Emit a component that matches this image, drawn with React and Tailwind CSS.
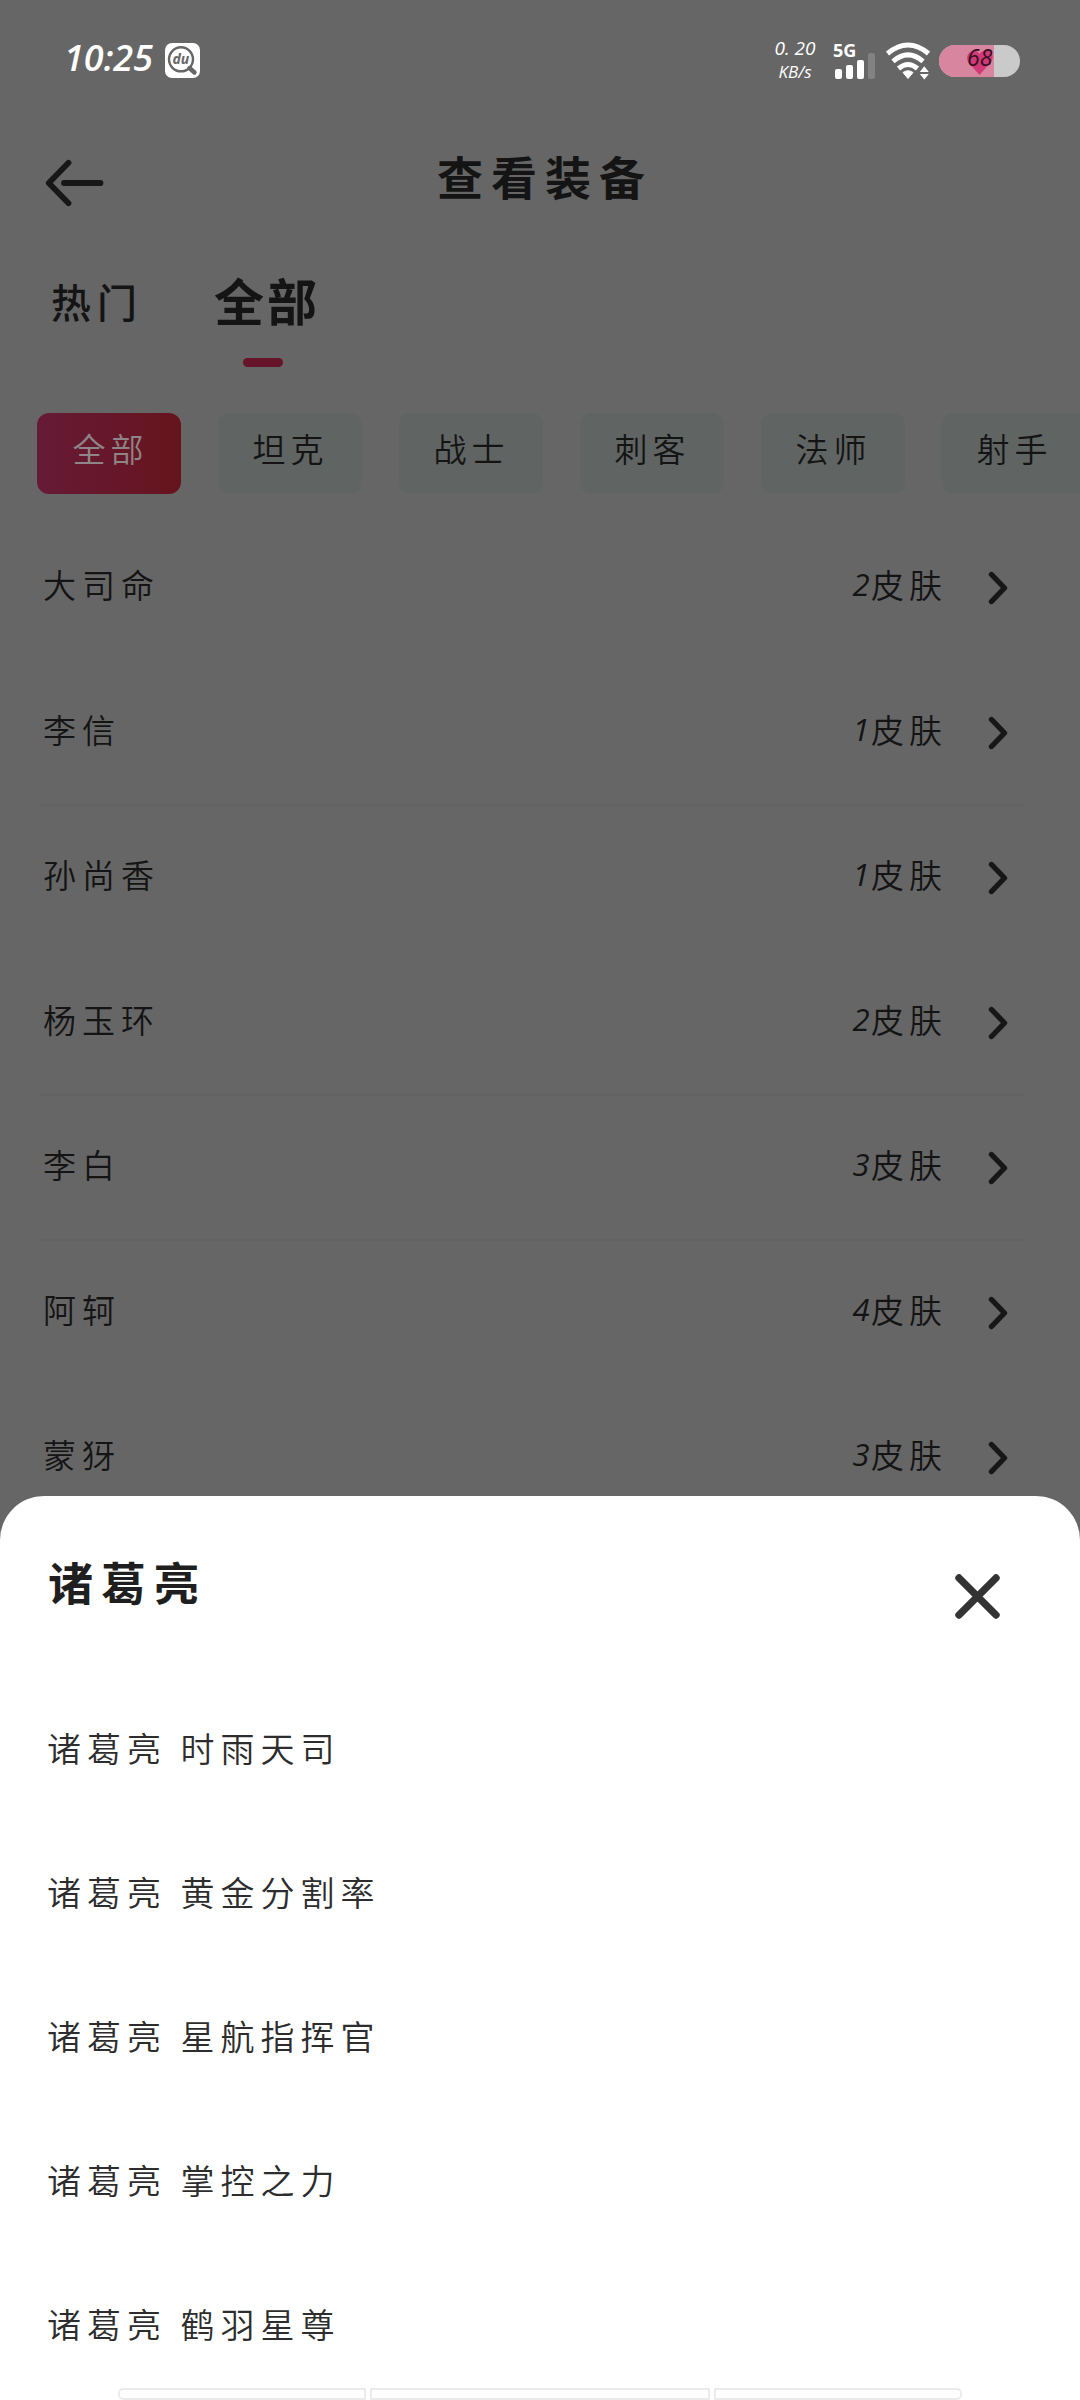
const cjk = "font-['Noto_Sans_CJK_SC','Noto_Sans',sans-serif]";

const roles = ["坦克", "战士", "刺客", "法师", "射手"];

const heroes = [
  { name: "大司命", count: "2" },
  { name: "李信", count: "1", line: true },
  { name: "孙尚香", count: "1" },
  { name: "杨玉环", count: "2", line: true },
  { name: "李白", count: "3", line: true },
  { name: "阿轲", count: "4" },
  { name: "蒙犽", count: "3" },
];

const skins = ["时雨天司", "黄金分割率", "星航指挥官", "掌控之力", "鹤羽星尊"];

function SearchBadge() {
  return (
    <svg className="ml-[15px] mt-[43px] h-[35px] w-[35px] shrink-0" viewBox="0 0 35 35">
      <rect width="35" height="35" rx="7" fill="#fff" />
      <circle cx="16" cy="16.3" r="12" fill="none" stroke="#666" strokeWidth="2.4" />
      <path d="M24.5 25 L29.5 29.5" stroke="#666" strokeWidth="4.4" strokeLinecap="round" />
      <text x="15.8" y="21" textAnchor="middle" fontSize="14" fontWeight="700" fontStyle="italic" fontFamily="Open Sans, sans-serif" fill="#666">du</text>
    </svg>
  );
}

function Signal() {
  return (
    <div className="ml-[17px] mt-[41px] flex w-[44px] flex-col">
      <span className="h-[18px] text-[18px] leading-[18px] font-bold">5G</span>
      <div className="-mt-[6px] ml-[2px] flex h-[26px] items-end gap-[4px]">
        <i className="h-[10px] w-[7px] rounded-[2px] bg-white" />
        <i className="h-[14px] w-[7px] rounded-[2px] bg-white" />
        <i className="h-[19px] w-[7px] rounded-[2px] bg-white" />
        <i className="h-[26px] w-[7px] rounded-[2px] bg-[#828282]" />
      </div>
    </div>
  );
}

function Wifi() {
  return (
    <svg className="ml-[9px] mt-[42px] h-[38px] w-[45px] shrink-0" viewBox="0 0 45 38" fill="none" stroke="#fff" strokeWidth="5">
      <path d="M1.5 11.5 Q22 -5.5 42.5 11.5" />
      <path d="M7 19.3 Q22 6.5 37 19.3" />
      <path d="M12.5 26.5 Q22 18.5 31.5 26.5" />
      <path d="M17 30.5 Q22 27 27 30.5 L22 36.5 Z" fill="#fff" stroke="#fff" strokeWidth="1" />
      <path d="M33.8 30 L38.3 24.2 L42.8 30 Z M33.8 32 L38.3 37.5 L42.8 32 Z" fill="#fff" stroke="none" />
    </svg>
  );
}

function Battery() {
  return (
    <div className="relative mt-[45px] ml-[8px] h-[32px] w-[81px]">
      <div className="flex h-full w-full overflow-hidden rounded-full bg-[#cacaca]">
        <div className="h-full w-[55px] overflow-hidden bg-[#d8859f]">
          <svg className="mt-[4px] ml-[27px] h-[27px] w-[28px]" viewBox="0 0 28 27">
            <path d="M13.5 26 L2 13 C-1 7 4 0 10 2 Q12.5 3 13.5 5 Q15 2 19 1.5 C26 1 29 8 25 13 Z" fill="#d13a76" />
          </svg>
        </div>
      </div>
      <span className="absolute -top-[5px] left-[28px] text-[23px] leading-[34px] text-[#35101f] italic">68</span>
    </div>
  );
}

function StatusBar() {
  return (
    <div className="flex h-[120px] shrink-0 items-start font-['Open_Sans',sans-serif] text-white">
      <span className="mt-[38px] ml-[64px] w-[86px] text-[36px] leading-[40px] font-semibold italic">10:25</span>
      <SearchBadge />
      <div className="mt-[38px] ml-auto flex w-[42px] flex-col items-center font-medium italic">
        <span className="text-[19px] leading-[20px] whitespace-pre">0. 20</span>
        <span className="mt-[5px] text-[17px] leading-[17px]">KB/s</span>
      </div>
      <Signal />
      <Wifi />
      <Battery />
      <div className="w-[60px] shrink-0" />
    </div>
  );
}

function Chevron() {
  return (
    <svg className="h-[34px] w-[21px]" viewBox="0 0 21 34">
      <path d="M3.5 3.5 L16.5 17 L3.5 30.5" fill="none" stroke="#171717" strokeWidth="5.4" strokeLinecap="round" strokeLinejoin="round" />
    </svg>
  );
}

function HeroRow({ hero }) {
  return (
    <div className={`mr-[56px] ml-[40px] flex h-[145px] shrink-0 items-center border-b-2 pb-[8px] ${hero.line ? "border-[#636363]" : "border-transparent"}`}>
      <span className="ml-[3px] text-[33px] leading-[40px] font-[350] tracking-[6px]">{hero.name}</span>
      <span className="ml-auto flex items-center text-[33px] leading-[40px] font-[350] tracking-[5px]">
        <span className="w-[20px] text-center font-['Open_Sans',sans-serif] text-[31px] font-normal tracking-normal italic">{hero.count}</span>
        皮肤
      </span>
      <span className="mt-[9px] mr-[15px] ml-[41px] flex"><Chevron /></span>
    </div>
  );
}

function SkinSheet() {
  return (
    <section className="absolute inset-x-0 bottom-0 flex h-[904px] flex-col rounded-t-[44px] bg-white">
      <header className="flex h-[180px] shrink-0 items-start">
        <h2 className="mt-[58px] ml-[48px] text-[45px] leading-[56px] font-bold tracking-[8px] text-[#1f1f1f]">诸葛亮</h2>
        <svg className="mt-[78px] mr-[80px] ml-auto h-[45px] w-[45px]" viewBox="0 0 45 45">
          <path d="M4 4 L41 41 M41 4 L4 41" stroke="#333" strokeWidth="7.4" strokeLinecap="round" />
        </svg>
      </header>
      <ul className="flex shrink-0 flex-col text-[#2d2d2d]">
        {skins.map((s) => (
          <li key={s} className="flex h-[144px] items-center pl-[47px] text-[34px] leading-[40px] font-[350] tracking-[6px]">
            诸葛亮 {s}
          </li>
        ))}
      </ul>
      <div className="mx-[118px] -mt-[8px] flex h-[12px] shrink-0 gap-[4px]">
        <i className="w-[248px] rounded-l-[5px] border-2 border-[#ebebeb]" />
        <i className="w-[340px] border-2 border-[#ebebeb]" />
        <i className="w-[248px] rounded-r-[5px] border-2 border-[#ebebeb]" />
      </div>
    </section>
  );
}

export default function App() {
  return (
    <main className={`relative flex h-[2400px] w-[1080px] flex-col overflow-hidden bg-[#666] text-[#141414] ${cjk}`}>
      <StatusBar />
      <header className="flex h-[120px] shrink-0 items-start">
        <svg className="mt-[39px] ml-[45px] h-[48px] w-[60px]" viewBox="0 0 60 48" fill="none" stroke="#171717" strokeLinecap="round" strokeLinejoin="round">
          <path d="M23.5 3.8 L3.8 24 L23.5 44.2" strokeWidth="5.8" />
          <path d="M19 24 H55.5" strokeWidth="5.8" />
        </svg>
        <h1 className="mt-[27px] ml-[332px] text-[46px] leading-[56px] font-bold tracking-[8px]">查看装备</h1>
      </header>
      <nav className="flex h-[173px] shrink-0 items-start">
        <span className="mt-[36px] ml-[51px] text-[40px] leading-[50px] font-medium tracking-[6px]">热门</span>
        <div className="ml-[71px] flex flex-col items-center">
          <span className="mt-[29px] text-[50px] leading-[60px] font-bold tracking-[3px]">全部</span>
          <i className="mt-[29px] mr-[9px] h-[9px] w-[40px] rounded-full bg-[#66142a]" />
        </div>
      </nav>
      <div className="ml-[37px] flex h-[81px] shrink-0 gap-[37px] text-[33px] leading-[40px] font-[350] tracking-[5px]">
        <button className="flex w-[144px] shrink-0 items-start justify-center rounded-[12px] bg-linear-to-r from-[#661a36] to-[#66131c] pt-[15px] pl-[3px] text-[#8f8587]">全部</button>
        {roles.map((r) => (
          <button key={r} className="flex w-[144px] shrink-0 items-start justify-center rounded-[12px] bg-[#606463] pt-[15px] pl-[1px]">{r}</button>
        ))}
      </div>
      <div className="mt-[22px] flex shrink-0 flex-col">
        {heroes.map((h) => (
          <HeroRow key={h.name} hero={h} />
        ))}
      </div>
      <SkinSheet />
    </main>
  );
}
